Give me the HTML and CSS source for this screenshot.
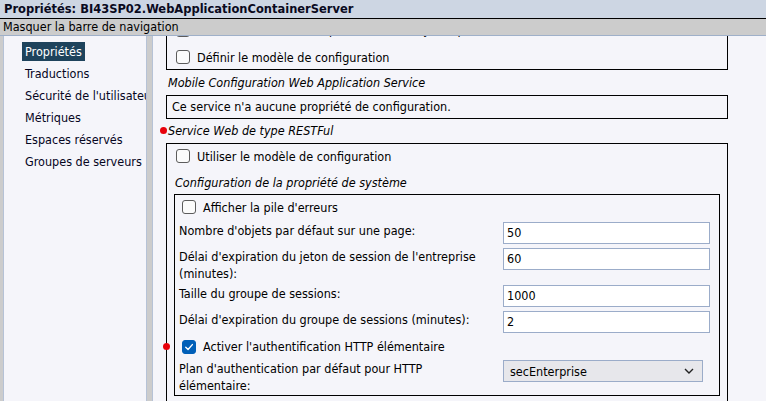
FILE: index.html
```html
<!DOCTYPE html>
<html lang="fr">
<head>
<meta charset="utf-8">
<title>Propriétés</title>
<link rel="stylesheet" href="styles.css">
</head>
<body>
<div class="titlebar">Propriétés: BI43SP02.WebApplicationContainerServer</div>
<div class="navbar">Masquer la barre de navigation</div>
<div class="main">
  <nav class="sidenav">
    <div class="nav-item"><span class="nav-label active">Propriétés</span></div>
    <div class="nav-item"><span class="nav-label">Traductions</span></div>
    <div class="nav-item"><span class="nav-label">Sécurité de l'utilisateur</span></div>
    <div class="nav-item"><span class="nav-label">Métriques</span></div>
    <div class="nav-item"><span class="nav-label">Espaces réservés</span></div>
    <div class="nav-item"><span class="nav-label">Groupes de serveurs</span></div>
  </nav>
  <section class="content">
    <div class="scroller">
      <div class="box box-first">
        <div class="cb-row cb-row-partial"><span class="cb"></span><span>Définir comme modèle pour ce service (y compris)</span></div>
        <div class="cb-row cb-row-second"><span class="cb"></span><span>Définir le modèle de configuration</span></div>
      </div>
      <div class="heading heading-first">Mobile Configuration Web Application Service</div>
      <div class="box box-msg">Ce service n'a aucune propriété de configuration.</div>
      <div class="heading marked">Service Web de type RESTFul</div>
      <div class="box box-outer">
        <div class="cb-row"><span class="cb"></span><span>Utiliser le modèle de configuration</span></div>
        <div class="subheading">Configuration de la propriété de système</div>
        <div class="box box-inner">
          <div class="cb-row cb-row-inner"><span class="cb"></span><span>Afficher la pile d'erreurs</span></div>
          <div class="field">
            <label class="field-label">Nombre d'objets par défaut sur une page:</label>
            <div class="input">50</div>
          </div>
          <div class="field">
            <label class="field-label">Délai d'expiration du jeton de session de l'entreprise (minutes):</label>
            <div class="input">60</div>
          </div>
          <div class="field">
            <label class="field-label">Taille du groupe de sessions:</label>
            <div class="input">1000</div>
          </div>
          <div class="field">
            <label class="field-label">Délai d'expiration du groupe de sessions (minutes):</label>
            <div class="input">2</div>
          </div>
          <div class="cb-row cb-row-inner cb-check-row marked-row">
            <span class="cb checked"><svg viewBox="0 0 14 14" width="14" height="14"><path d="M3.2 7.3 L5.9 10 L10.9 4.2" fill="none" stroke="#fff" stroke-width="1.6" stroke-linecap="round" stroke-linejoin="round"/></svg></span>
            <span>Activer l'authentification HTTP élémentaire</span>
          </div>
          <div class="field">
            <label class="field-label">Plan d'authentication par défaut pour HTTP élémentaire:</label>
            <div class="select"><span>secEnterprise</span><svg class="chev" viewBox="0 0 10 6" width="10" height="6"><path d="M1 1 L5 5 L9 1" fill="none" stroke="#222" stroke-width="1.4"/></svg></div>
          </div>
        </div>
        <div class="spacer"></div>
      </div>
    </div>
  </section>
</div>
</body>
</html>
```

FILE: styles.css
```css
html, body {
  margin: 0;
  padding: 0;
  height: 100%;
  overflow: hidden;
}
body {
  font-family: "DejaVu Sans Condensed", "Liberation Sans", sans-serif;
  font-size: 12.5px;
  color: #000;
  background: #f5f5fa;
}
.titlebar {
  height: 18px;
  line-height: 18px;
  padding-left: 4px;
  background: #cdd6e3;
  border-bottom: 1px solid #000;
  font-weight: bold;
  font-size: 12.75px;
  white-space: nowrap;
  color: #0a0a1e;
}
.navbar {
  height: 16px;
  line-height: 16px;
  padding-left: 3px;
  background: #cccccc;
  border-bottom: 1px solid #9fb0c9;
  font-size: 12.5px;
  white-space: nowrap;
}
.main {
  display: flex;
  height: calc(100% - 36px);
  background: #cccccc;
}
.sidenav {
  margin-left: 3px;
  width: 142px;
  flex: none;
  background: #f5f5fa;
  border-left: 1px solid #b6c2d6;
  border-right: 1px solid #b6c2d6;
  padding-top: 4px;
  overflow: hidden;
  white-space: nowrap;
}
.nav-item {
  height: 22px;
  display: flex;
  align-items: center;
  padding-left: 18px;
}
.nav-label {
  line-height: 19px;
  padding: 0 3px;
  color: #05051e;
}
.nav-label.active {
  background: #1e435c;
  color: #fff;
}
.content {
  flex: 1;
  margin-left: 5px;
  background: #f5f5fa;
  border-left: 1px solid #b6c2d6;
  overflow: hidden;
}
.scroller {
  margin-top: -18px;
  padding-left: 13px;
  padding-right: 38px;
}
.box {
  border: 1px solid #000;
}
.box-first {
  padding: 0;
}
.cb-row {
  height: 24px;
  display: flex;
  align-items: center;
  padding-left: 9px;
  white-space: nowrap;
  overflow: hidden;
}
.cb-row-partial {
  height: 21px;
}
.cb-row-second {
  margin-top: 5px;
}
.cb {
  flex: none;
  box-sizing: border-box;
  width: 14px;
  height: 14px;
  border: 1.5px solid #5c5c5c;
  border-radius: 3px;
  background: #fbfbfb;
  margin-right: 7px;
  display: flex;
  align-items: center;
  justify-content: center;
}
.cb.checked {
  background: #005fb8;
  border-color: #005fb8;
}
.heading {
  height: 24px;
  line-height: 24px;
  padding-left: 2px;
  font-style: italic;
  white-space: nowrap;
  position: relative;
}
.heading-first {
  padding-top: 1px;
}
.marked::before,
.marked-row::before {
  content: "";
  position: absolute;
  width: 7px;
  height: 7px;
  border-radius: 50%;
  background: #e8000b;
}
.marked::before {
  left: -6px;
  top: 8px;
}
.box-msg {
  height: 22px;
  line-height: 22px;
  padding-left: 5px;
  white-space: nowrap;
}
.box-outer {
  padding: 0 7px 0 7px;
  border-bottom: none;
}
.box-outer > .cb-row {
  padding-left: 2px;
}
.subheading {
  height: 23px;
  padding-top: 3px;
  line-height: 23px;
  padding-left: 1px;
  font-style: italic;
  white-space: nowrap;
}
.box-inner {
  padding: 0 9px 1px 4px;
  display: flex;
  flex-direction: column;
  gap: 2px;
}
.cb-row-inner {
  padding-left: 3px;
}
.cb-check-row {
  height: 21px;
  position: relative;
  overflow: visible;
}
.marked-row::before {
  left: -16px;
  top: 7px;
}
.field {
  display: flex;
  align-items: flex-start;
}
.field-label {
  width: 310px;
  margin-right: 14px;
  flex: none;
  line-height: 17px;
  padding-top: 1px;
}
.input {
  flex: 1;
  margin: 1px 0;
  height: 22px;
  box-sizing: border-box;
  border: 1px solid #9bacc9;
  background: #fff;
  line-height: 20px;
  padding-left: 3px;
}
.select {
  width: 200px;
  margin: 1px 0;
  height: 22px;
  box-sizing: border-box;
  border: 1px solid #9bacc9;
  background: #e7e7eb;
  display: flex;
  align-items: center;
  justify-content: space-between;
  padding: 0 8px 0 6px;
}
.spacer {
  height: 20px;
}
```
